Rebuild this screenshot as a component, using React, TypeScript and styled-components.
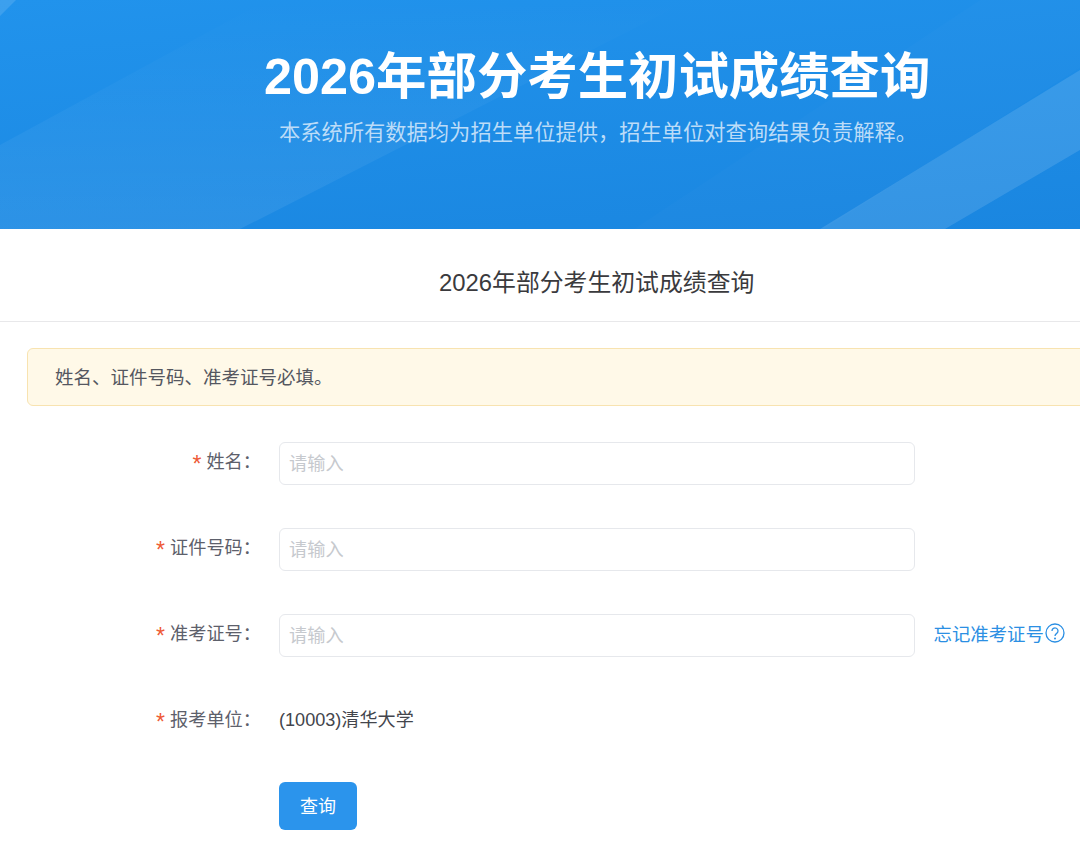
import styled, { createGlobalStyle } from "styled-components";

const GlobalStyle = createGlobalStyle`
  html, body {
    margin: 0;
    padding: 0;
    background: #fff;
    overflow: hidden;
  }
  body {
    font-family: "Liberation Sans", "Noto Sans CJK SC", sans-serif;
  }
  * {
    box-sizing: border-box;
  }
`;

const fields = [
  { label: "姓名", hint: false },
  { label: "证件号码", hint: false },
  { label: "准考证号", hint: true },
];

const App = () => {
  return (
    <Page>
      <GlobalStyle />
      <Banner>
        <BannerArt viewBox="0 0 1080 229" preserveAspectRatio="none" aria-hidden="true">
          <defs>
            <linearGradient id="bandFade" x1="0" y1="0" x2="0" y2="1">
              <stop offset="0" stopColor="#fff" stopOpacity="0" />
              <stop offset="1" stopColor="#fff" stopOpacity="0.075" />
            </linearGradient>
          </defs>
          <polygon points="0,0 16,0 0,16" fill="#fff" opacity="0.12" />
          <polygon points="0,145 267,0 690,0 240,229 0,229" fill="url(#bandFade)" />
          <polygon points="634,229 980,0 1080,0 1080,68 824,229" fill="#fff" opacity="0.015" />
          <polygon points="820,229 1080,70 1080,150 945,229" fill="#fff" opacity="0.12" />
        </BannerArt>
        <BannerTitle>2026年部分考生初试成绩查询</BannerTitle>
        <BannerNote>本系统所有数据均为招生单位提供，招生单位对查询结果负责解释。</BannerNote>
      </Banner>
      <PageTitle>2026年部分考生初试成绩查询</PageTitle>
      <Notice>姓名、证件号码、准考证号必填。</Notice>
      <Form>
        {fields.map((field) => (
          <Row key={field.label}>
            <Label>{field.label}：</Label>
            <Input placeholder="请输入" readOnly />
            {field.hint && (
              <HintLink>
                忘记准考证号
                <HintIcon viewBox="0 0 20 20" aria-hidden="true">
                  <circle cx="10" cy="10" r="9" />
                  <path d="M7 8a3 3 0 1 1 4.7 2.4c-1.1.8-1.7 1.3-1.7 2.6" />
                  <circle className="dot" cx="10" cy="15.4" r="1" />
                </HintIcon>
              </HintLink>
            )}
          </Row>
        ))}
        <Row>
          <Label>报考单位：</Label>
          <Value>(10003)清华大学</Value>
        </Row>
        <Actions>
          <QueryButton type="button">查询</QueryButton>
        </Actions>
      </Form>
    </Page>
  );
};

export default App;

const Page = styled.div`
  width: 1080px;
  height: 848px;
  overflow: hidden;
  background: #fff;
`;

const Banner = styled.header`
  position: relative;
  height: 229px;
  padding: 45px 0 0 264px;
  overflow: hidden;
  background: linear-gradient(175deg, #2193ec 0%, #1a86e0 100%);
`;

const BannerArt = styled.svg`
  position: absolute;
  inset: 0;
  width: 100%;
  height: 100%;
`;

const BannerTitle = styled.h1`
  position: relative;
  margin: 0;
  font-size: 50.4px;
  line-height: 64px;
  font-weight: 700;
  color: #fff;
  white-space: nowrap;
`;

const BannerNote = styled.p`
  position: relative;
  margin: 9px 0 0 15px;
  font-size: 21.27px;
  line-height: 30px;
  color: #bcdcf8;
  white-space: nowrap;
`;

const PageTitle = styled.h2`
  height: 93px;
  margin: 0;
  padding-left: 439px;
  border-bottom: 1px solid #e8e8ea;
  font-size: 23.85px;
  line-height: 107px;
  font-weight: 400;
  color: #3a3a3d;
  white-space: nowrap;
`;

const Notice = styled.div`
  width: 1100px;
  height: 58px;
  margin: 26px 0 0 27px;
  padding-left: 27px;
  border: 1px solid #f8e3b0;
  border-radius: 6px;
  background: #fff9e8;
  font-size: 18.5px;
  line-height: 57px;
  color: #55575f;
`;

const Form = styled.form`
  display: flex;
  flex-direction: column;
  gap: 43px;
  margin-top: 36px;
`;

const Row = styled.div`
  display: flex;
  align-items: center;
  height: 43px;
`;

const Label = styled.label`
  width: 261px;
  margin-right: 18px;
  margin-bottom: 4px;
  text-align: right;
  font-size: 18.2px;
  color: #5d606b;
  white-space: nowrap;

  &::before {
    content: "*";
    margin-right: 5px;
    font-size: 23px;
    line-height: 1;
    vertical-align: -4px;
    color: #ee5a36;
  }
`;

const Input = styled.input`
  width: 636px;
  height: 43px;
  padding: 1px 10px 0 9px;
  border: 1px solid #e6e8ec;
  border-radius: 6px;
  outline: none;
  background: #fff;
  font-family: inherit;
  font-size: 18.2px;
  color: #333;

  &::placeholder {
    color: #c6c9ce;
  }
`;

const HintLink = styled.a`
  display: flex;
  align-items: center;
  margin: 0 0 6px 18.5px;
  font-size: 18.4px;
  color: #2b8fe3;
  white-space: nowrap;
`;

const HintIcon = styled.svg`
  width: 20px;
  height: 20px;
  margin-left: 1px;
  fill: none;
  stroke: currentColor;
  stroke-width: 1.3;

  .dot {
    fill: currentColor;
    stroke: none;
  }
`;

const Value = styled.span`
  margin-bottom: 8px;
  font-size: 18.1px;
  color: #43454c;
  white-space: nowrap;
`;

const Actions = styled.div`
  margin-top: -4px;
  padding-left: 279px;
`;

const QueryButton = styled.button`
  width: 78px;
  height: 48px;
  padding: 0 0 2px;
  border: none;
  border-radius: 6px;
  background: #2b94ec;
  font-family: inherit;
  font-size: 18px;
  color: #fff;
`;
